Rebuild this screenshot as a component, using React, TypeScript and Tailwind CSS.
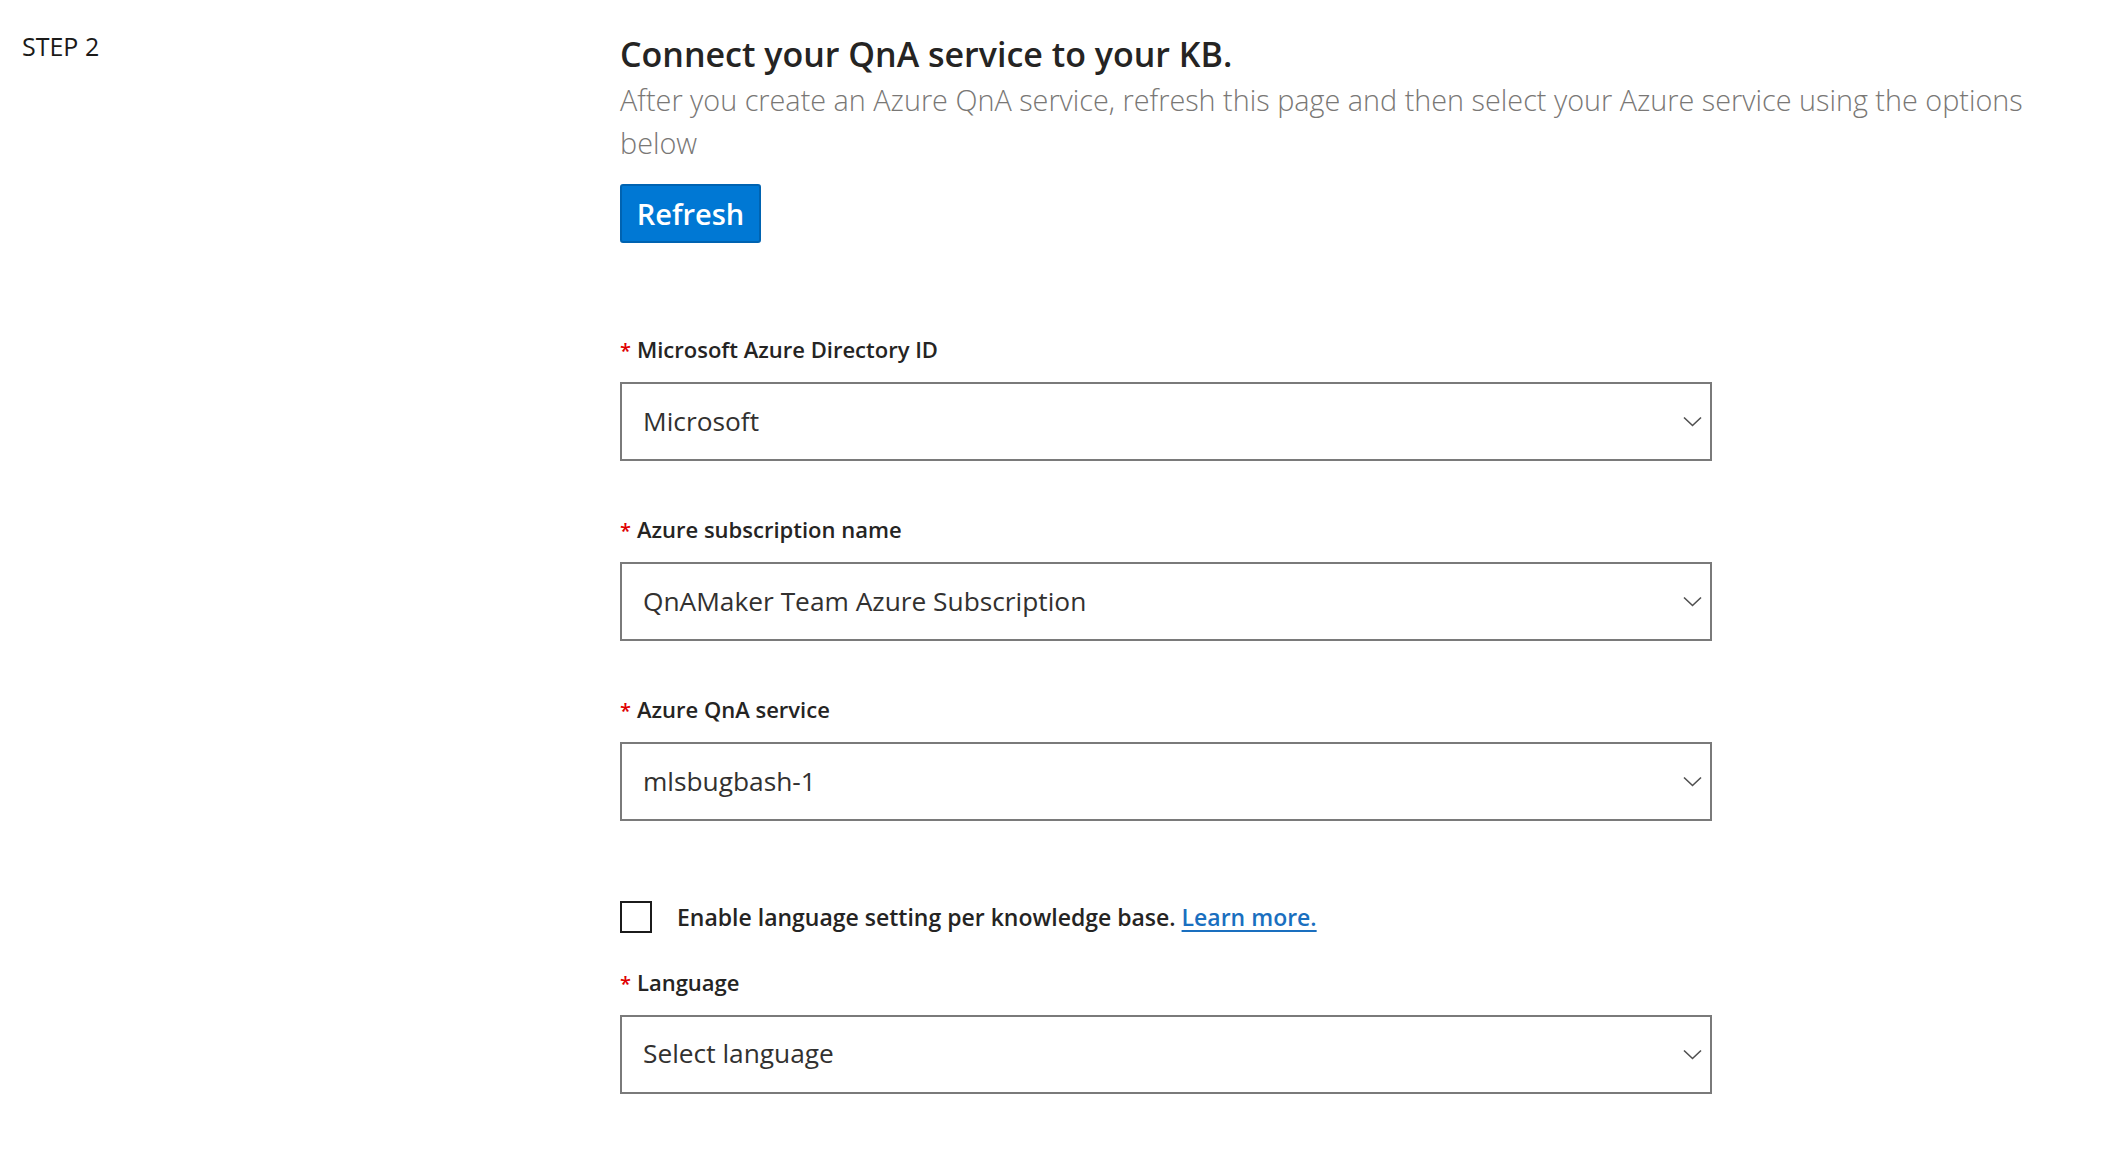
type FieldProps = {
  label: string;
  value: string;
};

function Chevron() {
  return (
    <svg width="19" height="11" viewBox="0 0 19 11" fill="none" className="text-[#505050]">
      <path d="M1 1.5 L9.5 9.5 L18 1.5" stroke="currentColor" strokeWidth="1.6" />
    </svg>
  );
}

function SelectField({ label, value }: FieldProps) {
  return (
    <div className="flex flex-col">
      <label className="flex items-baseline text-[22px] leading-[30px] font-semibold text-[#252423]">
        <span className="text-[#e00000] mr-[6px] text-[20px]">*</span>
        {label}
      </label>
      <div className="mt-[16px] flex h-[79px] w-[1092px] items-center justify-between border-2 border-[#7a7a7a] bg-white pl-[21px] pr-[8px]">
        <span className="text-[26.3px] text-[#323130]">{value}</span>
        <Chevron />
      </div>
    </div>
  );
}

export default function App() {
  return (
    <div
      className="flex min-h-screen w-full bg-white"
      style={{ fontFamily: '"Open Sans", "Noto Sans", Arial, sans-serif' }}
    >
      <div className="w-[620px] shrink-0 pl-[22px] pt-[30px]">
        <div className="text-[25px] leading-[32px] text-[#1b1a19]">STEP 2</div>
      </div>

      <div className="flex-1 pt-[31px] pr-[40px]">
        <h1 className="text-[34px] leading-[46px] font-semibold text-[#252423]">
          Connect your QnA service to your KB.
        </h1>
        <p className="mt-[1px] text-[28.8px] leading-[43px] font-light text-[#797775]">
          After you create an Azure QnA service, refresh this page and then select your Azure service using the options
          <br />
          below
        </p>

        <button
          type="button"
          className="mt-[20px] h-[59px] w-[141px] rounded-[3px] border-2 border-[#0063b1] bg-[#0078d4] text-[29px] font-semibold text-white"
        >
          Refresh
        </button>

        <div className="mt-[91px] flex flex-col gap-[53px]">
          <SelectField label="Microsoft Azure Directory ID" value="Microsoft" />
          <SelectField label="Azure subscription name" value="QnAMaker Team Azure Subscription" />
          <SelectField label="Azure QnA service" value="mlsbugbash-1" />
        </div>

        <div className="mt-[79px] flex items-center">
          <div className="h-[32px] w-[32px] border-2 border-[#1b1b1b] bg-white" />
          <span className="ml-[25px] text-[23px] font-semibold text-[#252423]">
            Enable language setting per knowledge base.{" "}
            <a href="#" className="text-[#1a6fbf] underline underline-offset-4">
              Learn more.
            </a>
          </span>
        </div>

        <div className="mt-[32px]">
          <SelectField label="Language" value="Select language" />
        </div>
      </div>
    </div>
  );
}
